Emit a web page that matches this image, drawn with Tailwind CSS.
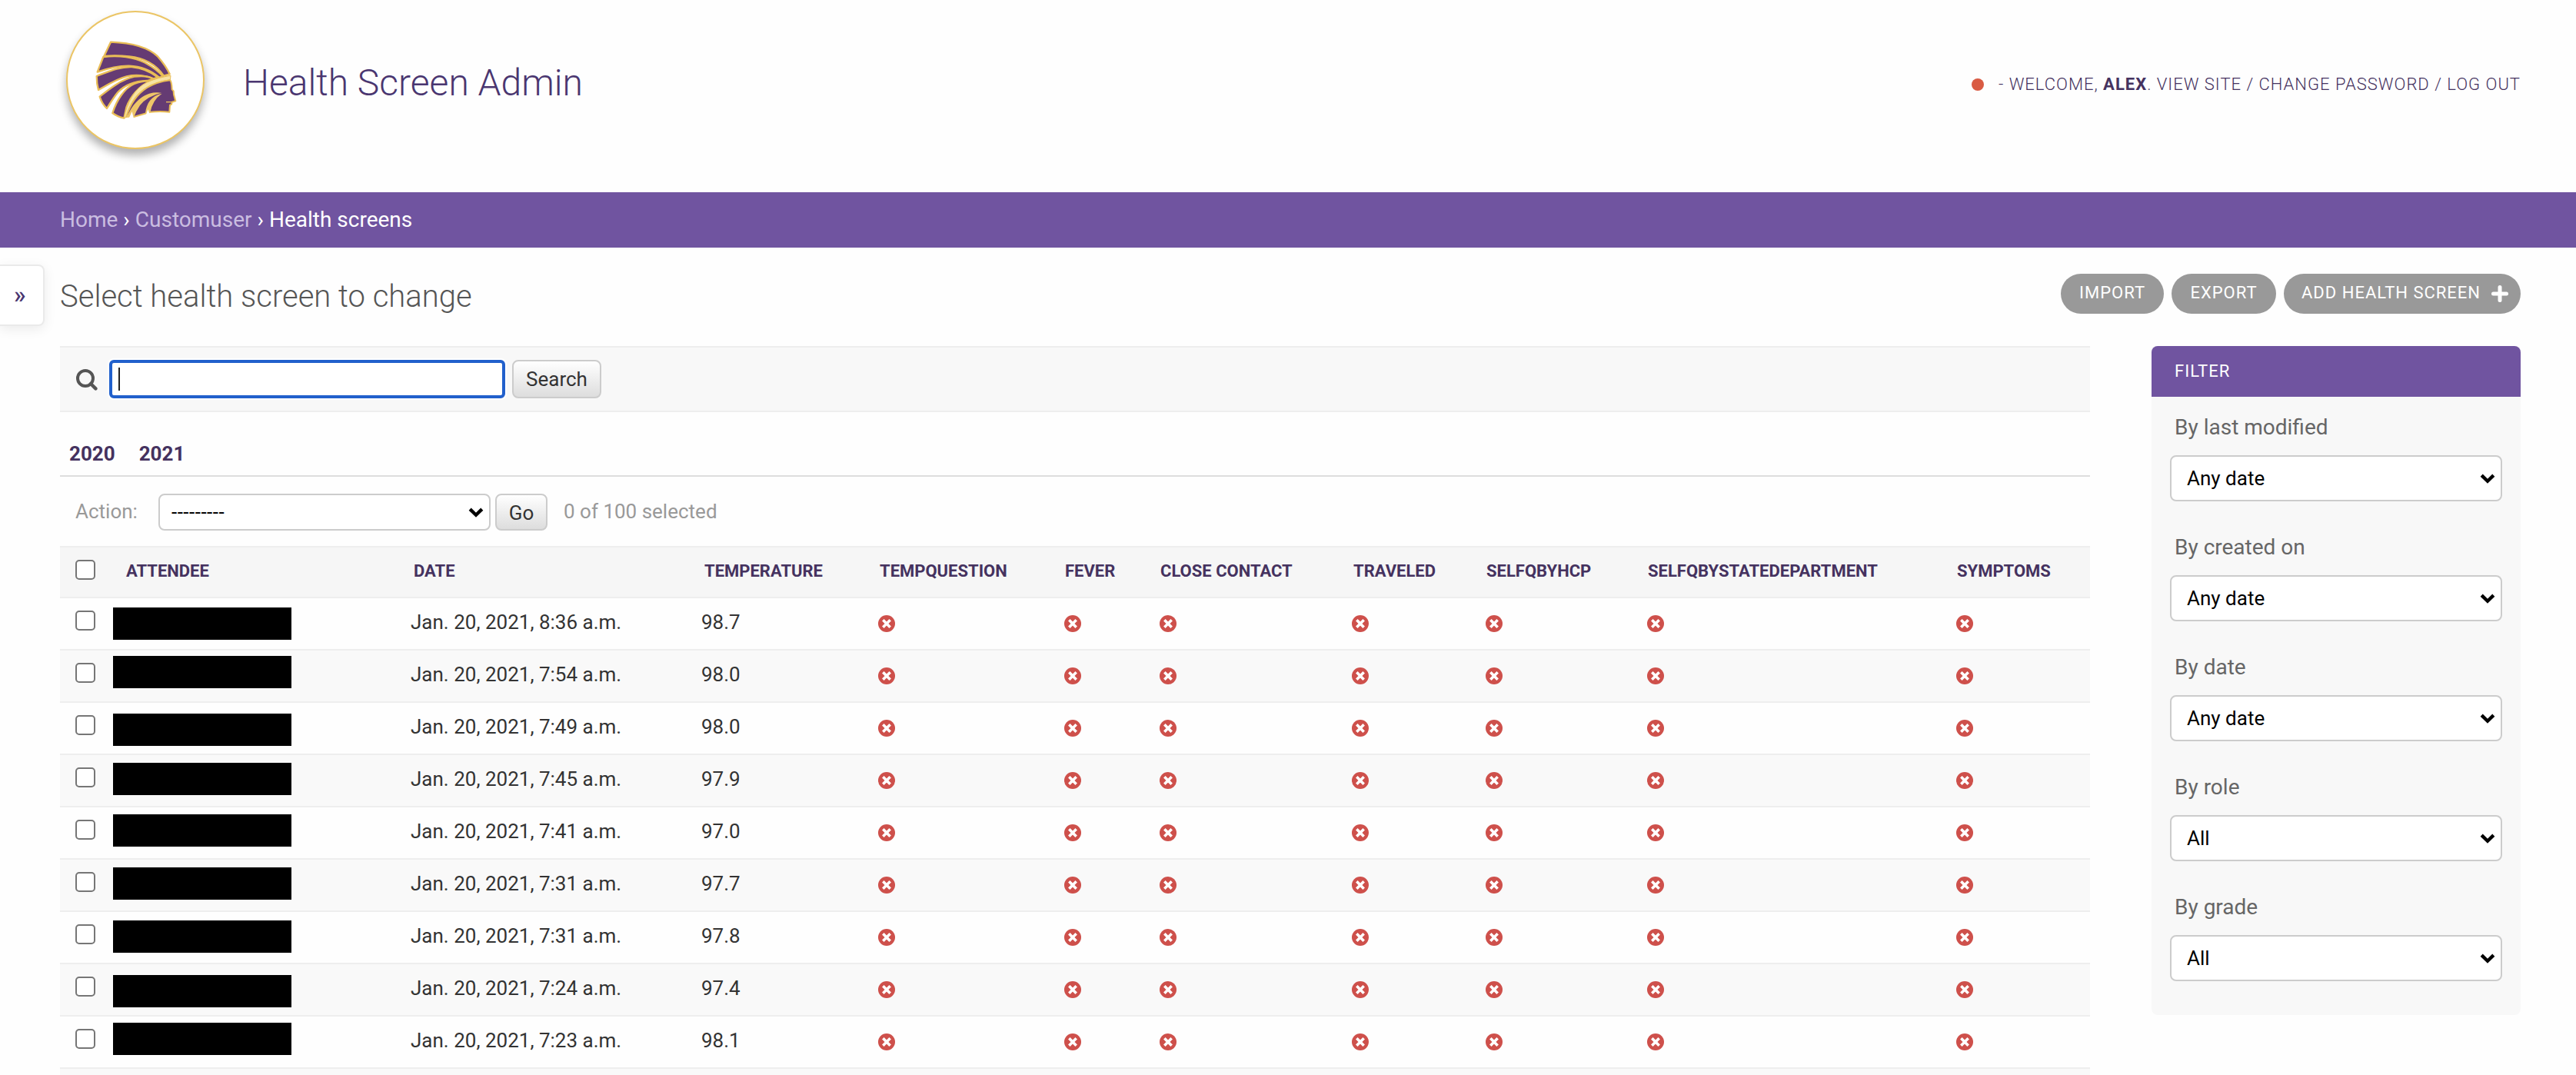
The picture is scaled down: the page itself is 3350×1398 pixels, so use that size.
<!DOCTYPE html>
<html lang="en">
<head>
<meta charset="utf-8">
<title>Select health screen to change | Health Screen Admin</title>
<script src="https://cdn.jsdelivr.net/npm/@tailwindcss/browser@4"></script>
</head>
<body class="h-[1398px] w-[3350px] overflow-hidden bg-[#fefefe] font-[Roboto,sans-serif] text-[26px] leading-8 text-[#333]">
<svg class="hidden">
  <symbol id="no" viewBox="0 0 22 22"><circle cx="11" cy="11" r="11" fill="#ce504b"/><path d="M7.6 7.6l6.8 6.8M14.4 7.6l-6.8 6.8" stroke="#fff" stroke-width="3.6" stroke-linecap="square"/></symbol>
  <symbol id="chev" viewBox="0 0 20 13"><path d="M2.2 2.2L10 9.8l7.8-7.6" fill="none" stroke="currentColor" stroke-width="4.4"/></symbol>
</svg>

<header class="flex h-[250px] items-start justify-between pr-[72px] pl-[86px]">
  <div class="flex">
    <div class="mt-[14px] flex size-[180px] items-center justify-center rounded-full border-2 border-[#ebc565] bg-white shadow-[0_8px_12px_rgba(0,0,0,0.3)]">
      <svg class="mt-[2px] h-[108px] w-[112px]" viewBox="186 154 336 324" fill="#653b73" stroke="#e9bd57" stroke-width="7" stroke-linejoin="round">
        <path d="M258 165C340 168 405 186 442 222C463 246 478 268 488 290L465 297C440 260 400 228 330 221C290 217 255 218 232 220Z"/>
        <path d="M229 223C290 215 350 224 390 245C425 264 450 285 462 300L447 303C420 280 380 260 330 258C280 257 240 270 206 282Z"/>
        <path d="M203 298C240 285 290 260 340 262C385 266 420 285 442 303L425 308C400 298 360 290 320 299C280 309 240 335 210 352Q203 328 203 298Z"/>
        <path d="M215 378C250 350 300 310 350 300C385 295 410 300 425 309L400 316C350 318 312 332 285 362C268 383 255 405 243 424C230 412 221 397 215 378Z"/>
        <path d="M265 442C280 395 310 345 350 328C375 318 400 316 415 318C370 335 335 375 319 420L310 462Q285 457 265 442Z"/>
        <path d="M310 461C320 405 350 345 400 322C430 308 465 300 492 296L490 312C440 320 395 338 365 368C340 395 325 430 318 459Z" fill="#f7e3a4" stroke-width="3"/>
        <path d="M319 457C330 420 350 375 400 343C430 325 465 317 490 314C497 325 496 340 497 350L503 356L504 370L511 395L497 399L495 408L489 411L487 438Q450 434 412 438L348 457L338 450Z" stroke-width="6"/>
        <path d="M320 459C336 425 358 384 408 366Q432 359 456 363Q400 376 372 412Q356 436 348 459Z" fill="#eec668" stroke="none"/>
        <path d="M393 442C398 405 415 374 458 366Q420 392 412 440Z" fill="#eec668" stroke="none"/>
        <path d="M329 462L341 436L347 461ZM396 448L403 428L410 445Z" fill="#fff" stroke="none"/>
        <path d="M474 399H495" stroke-width="4"/>
      </svg>
    </div>
    <h1 class="mt-[76px] ml-[50px] text-[48px] leading-[64px] font-light text-[#4a3670]">Health Screen Admin</h1>
  </div>
  <div class="mt-[94px] flex items-center text-[22px] font-light tracking-[1px] text-[#45325f] uppercase">
    <span class="mr-[19px] size-4 rounded-full bg-[#d95b43]"></span>
    <span>- Welcome, <b class="font-bold">Alex</b>. <a>View site</a> / <a>Change password</a> / <a>Log out</a></span>
  </div>
</header>

<nav class="flex h-[72px] items-center gap-[7px] bg-[#7054a0] pl-[78px] text-[28px] text-white">
  <a class="text-[#cabde0]">Home</a><span>›</span><a class="text-[#cabde0]">Customuser</a><span>›</span><span>Health screens</span>
</nav>

<div class="flex">
  <button class="mt-[22px] flex h-20 w-[58px] items-center rounded-r-lg border-2 border-l-0 border-[#eaeaea] bg-white pb-[3px] pl-[18px] text-[32px] font-medium text-[#4a3670] shadow-[0_4px_16px_rgba(0,0,0,0.08)]">»</button>
  <main class="ml-5 w-[3200px]">
    <div class="flex h-32 items-start justify-between">
      <h2 class="mt-10 text-[40px] leading-[48px] font-light text-[#555]">Select health screen to change</h2>
      <div class="mt-[34px] flex gap-[10px] text-[22px] leading-[49px] tracking-[1px] text-white uppercase">
        <a class="h-[52px] w-[134px] rounded-full bg-[#999] text-center">Import</a>
        <a class="h-[52px] w-[136px] rounded-full bg-[#999] text-center">Export</a>
        <a class="flex h-[52px] w-[308px] justify-between rounded-full bg-[#999] pr-4 pl-[23px]">Add health screen
          <svg class="mt-[15px] size-[22px]" viewBox="0 0 22 22"><path d="M11 2.5v17M2.5 11h17" stroke="#fff" stroke-width="5" stroke-linecap="round"/></svg></a>
      </div>
    </div>

    <div class="flex items-start gap-20">
      <section class="w-[2640px]">
        <div class="flex h-[86px] items-center border-y-2 border-[#eee] bg-[#f8f8f8] pl-[21px]">
          <svg class="mt-[2px] mr-[15px] size-7" viewBox="0 0 28 28" fill="none" stroke="#555" stroke-width="4"><circle cx="12" cy="12" r="10"/><path d="M19 19l6.4 6.4" stroke-width="4.4" stroke-linecap="round"/></svg>
          <div class="flex h-[50px] w-[515px] items-center rounded-md border-4 border-[#2160cc] bg-white pl-2 shadow-[0_0_0_2px_#fff]"><span class="h-[30px] w-[2px] bg-[#222]"></span></div>
          <button class="ml-[9px] h-[50px] w-[116px] rounded-lg border-2 border-[#ccc] bg-linear-to-b from-white to-[#ddd]">Search</button>
        </div>
        <div class="flex h-[84px] gap-[31px] border-b-2 border-[#ddd] pt-[38px] pl-3 font-bold text-[#45325f]"><a>2020</a><a>2021</a></div>
        <div class="flex h-[90px] items-center pl-5 text-[#999]">
          <span class="w-[108px]">Action:</span>
          <div class="mt-[2px] flex h-12 w-[432px] items-center justify-between rounded-lg border-2 border-[#ccc] bg-white pr-[7px] pl-[15px] text-black"><span class="tracking-[0.5px]">---------</span><svg class="h-[13px] w-5"><use href="#chev"/></svg></div>
          <button class="mt-[2px] ml-[6px] h-12 w-[68px] rounded-lg border-2 border-[#ccc] bg-linear-to-b from-white to-[#ddd] pt-[2px] text-[#333]">Go</button>
          <span class="ml-[21px]">0 of 100 selected</span>
        </div>
        <div class="grid h-[68px] grid-cols-[86px_374px_378px_228px_241px_124px_251px_173px_210px_402px_1fr] items-center border-y-2 border-[#eee] bg-[#f6f6f6] pb-[3px] text-[22px] font-bold text-[#45325f] uppercase">
          <span class="mb-[3px] ml-5 size-[26px] rounded-[5px] border-2 border-[#767676] bg-white"></span>
          <a>Attendee</a><a>Date</a><a>Temperature</a><a>Tempquestion</a><a>Fever</a><a>Close contact</a><a>Traveled</a><a>Selfqbyhcp</a><a>Selfqbystatedepartment</a><a>Symptoms</a>
        </div>
        <div id="rows"></div>
        <div class="h-2 bg-[#f9f9f9]"></div>
      </section>

      <aside class="w-[480px] overflow-hidden rounded-lg bg-[#f8f8f8] pb-6">
        <h3 class="h-[66px] bg-[#7054a0] pl-[30px] text-[22px] leading-[65px] tracking-[1px] text-white uppercase">Filter</h3>
        <div id="filters"></div>
      </aside>
    </div>
  </main>
</div>

<script>
const rows = [
  ['8:36', '98.7', 12], ['7:54', '98.0', 7], ['7:49', '98.0', 14],
  ['7:45', '97.9', 10], ['7:41', '97.0', 9], ['7:31', '97.7', 10],
  ['7:31', '97.8', 11], ['7:24', '97.4', 14], ['7:23', '98.1', 8]
];
const no = '<svg class="mt-[22px] size-[22px]"><use href="#no"/></svg>';
document.getElementById('rows').innerHTML = rows.map(([time, temp, top]) => `
  <div class="grid h-[68px] grid-cols-[69px_387px_378px_230px_242px_124px_250px_174px_210px_402px_1fr] items-start border-b-2 border-[#eee] bg-[#fefefe] even:bg-[#f9f9f9]">
    <span class="mt-4 ml-5 size-[26px] rounded-[5px] border-2 border-[#767676] bg-white"></span>
    <span class="h-[42px] w-[232px] bg-black" style="margin-top:${top}px"></span>
    <span class="mt-[15px]">Jan. 20, 2021, ${time} a.m.</span>
    <span class="mt-[15px]">${temp}</span>${no.repeat(7)}
  </div>`).join('');
document.getElementById('filters').innerHTML = [
  ['By last modified', 'Any date'], ['By created on', 'Any date'], ['By date', 'Any date'], ['By role', 'All'], ['By grade', 'All']
].map(([label, value]) => `
  <div class="h-[156px] px-6 pt-6">
    <h4 class="mb-5 pl-[6px] text-[28px] text-[#666]">${label}</h4>
    <div class="flex h-[60px] items-center justify-between rounded-lg border-2 border-[#ccc] bg-white pr-[7px] pl-5 text-black"><span>${value}</span><svg class="h-[13px] w-5"><use href="#chev"/></svg></div>
  </div>`).join('');
</script>
</body>
</html>
